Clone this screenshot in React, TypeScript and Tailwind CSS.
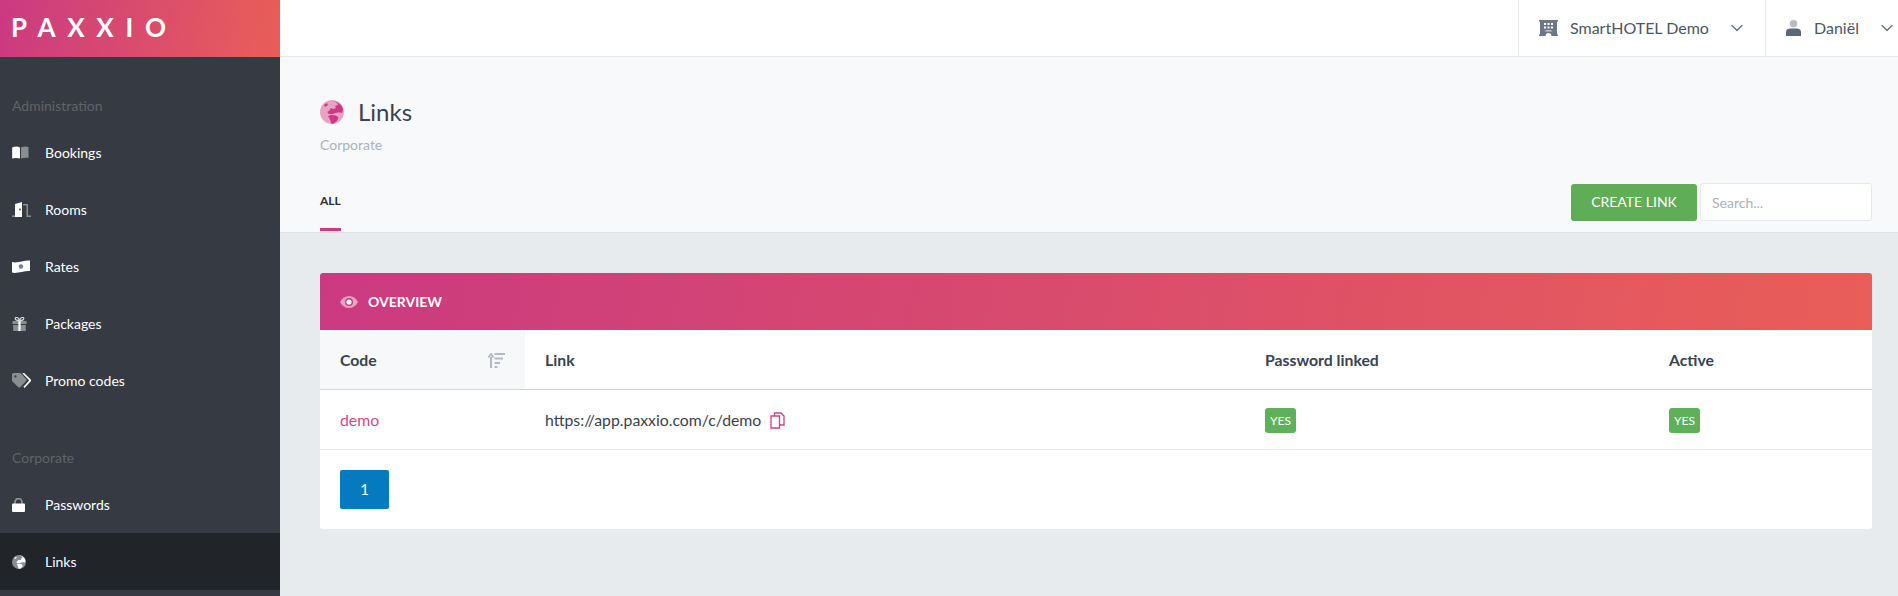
import { ChevronDown } from "lucide-react";
import type { ReactNode } from "react";

// Two-tone sidebar icons: white part and grey part
const GREY = "#8a8d92";

const BookIcon = () => (
  <svg width="17" height="13" viewBox="0 0 18 14">
    <path d="M0 1.5 C3 .3 6 .3 8.4 1.5 V13.5 C6 12.6 3 12.6 0 13.4 Z" fill="#fff" />
    <path d="M9.6 1.5 C12 .3 15 .3 17.6 1.2 V12.8 C15 12.4 12 12.6 9.6 13.5 Z" fill={GREY} />
  </svg>
);

const DoorIcon = () => (
  <svg width="19" height="15" viewBox="0 0 19 15">
    <path d="M3 15 V2 L10 0 V15 Z" fill="#fff" />
    <circle cx="8" cy="7.5" r=".9" fill="#363a42" />
    <path d="M0 13.4 H3 V15 H0 Z" fill={GREY} />
    <path d="M11 2 H16 V13.4 H19 V15 H14.5 V3.6 H11 Z" fill={GREY} />
  </svg>
);

const MoneyIcon = () => (
  <svg width="18" height="13" viewBox="0 0 18 13">
    <path d="M0 2 C5 3.5 12 0 18 .5 V11 C12 10.5 5 14 0 12.5 Z" fill="#fff" />
    <circle cx="9" cy="6.5" r="2.2" fill="#6f7f96" />
  </svg>
);

const GiftIcon = () => (
  <svg width="15" height="14" viewBox="0 0 15 14">
    <path d="M0.5 4 H14.5 V7 H0.5 Z M1.2 8 H13.8 V14 H1.2 Z" fill={GREY} />
    <path d="M6.4 4 H8.6 V14 H6.4 Z" fill="#fff" />
    <path d="M7.5 3.6 C5 3.6 3.2 3 3.2 1.6 C3.2 -.3 6.4 0 7.5 3.2 C8.6 0 11.8 -.3 11.8 1.6 C11.8 3 10 3.6 7.5 3.6 Z" fill="none" stroke="#d7d8da" strokeWidth="1.2" />
  </svg>
);

const TagIcon = () => (
  <svg width="19" height="15" viewBox="0 0 19 15">
    <path d="M0 1.5 Q0 0 1.5 0 H8.5 L15 7 L8.5 14 Q7.5 15 6.4 14.2 L0 8 Z" fill={GREY} />
    <circle cx="3.4" cy="3.4" r="1.1" fill="#363a42" />
    <path d="M11 0 L18.4 7.4 L12 14.4" fill="none" stroke="#fff" strokeWidth="1.6" />
  </svg>
);

const LockIcon = () => (
  <svg width="13" height="14" viewBox="0 0 13 14">
    <path d="M3 6 V4 A3.5 3.5 0 0 1 10 4 V6" fill="none" stroke={GREY} strokeWidth="1.8" />
    <rect x="0" y="5.5" width="13" height="8.5" rx="1" fill="#fff" />
  </svg>
);

const Globe = ({ sea, land }: { sea: string; land: string }) => (
  <svg viewBox="0 0 24 24" className="h-full w-full">
    <circle cx="12" cy="12" r="12" fill={sea} />
    <path d="M13 1 C16 2 18 3 18 5 L15 6 L16 8 L13 9 L11 8 L9 11 C6 11 8 15 12 14 C16 13 19 12 22 13 L23 10 C23 6 19 2 13 1 Z" fill={land} />
    <path d="M8 16 C12 14 16 15 18 17 C19 19 16 23 12 24 C10 22 11 20 8 16 Z" fill={land} />
    <path d="M4 5 L7 3 L8 5 L5 7 Z" fill={land} />
  </svg>
);

const navGroups: { label: string; items: { name: string; icon: ReactNode; active?: boolean }[] }[] = [
  {
    label: "Administration",
    items: [
      { name: "Bookings", icon: <BookIcon /> },
      { name: "Rooms", icon: <DoorIcon /> },
      { name: "Rates", icon: <MoneyIcon /> },
      { name: "Packages", icon: <GiftIcon /> },
      { name: "Promo codes", icon: <TagIcon /> },
    ],
  },
  {
    label: "Corporate",
    items: [
      { name: "Passwords", icon: <LockIcon /> },
      {
        name: "Links",
        active: true,
        icon: (
          <span className="block h-[14px] w-[14px]">
            <Globe sea="#8a8d92" land="#ffffff" />
          </span>
        ),
      },
    ],
  },
];

const Sidebar = () => (
  <aside className="flex w-[280px] shrink-0 flex-col bg-[#363a42]">
    <div className="flex h-[57px] items-center bg-[linear-gradient(100deg,#cb3a82,#e95e58)] pb-[2px] pl-[11px] text-[26px] font-bold tracking-[11.7px] text-white">
      PAXXIO
    </div>
    {navGroups.map((group) => (
      <div key={group.label}>
        <div className="pb-2 pl-3 pt-[39px] text-sm leading-5 text-[#5f636a]">{group.label}</div>
        {group.items.map((item) => (
          <div
            key={item.name}
            className={`flex h-[57px] items-center pl-3 text-sm text-white ${item.active ? "bg-[#212428]" : ""}`}
          >
            <span className="flex w-[33px] items-center">{item.icon}</span>
            {item.name}
          </div>
        ))}
      </div>
    ))}
  </aside>
);

const Topbar = () => (
  <header className="flex h-[57px] justify-end border-b border-[#e6e9ed] bg-white text-base text-[#4d5661]">
    <div className="flex w-[247px] items-center border-l border-[#e6e9ed] pl-5">
      <svg width="19" height="16" viewBox="0 0 19 16" className="mr-[12px]">
        <path d="M0 0 H19 V1.4 H18 V14.6 H19 V16 H12.5 C12.5 12 6.5 12 6.5 16 H0 V14.6 H1 V1.4 H0 Z" fill="#6c7786" />
        <path d="M5 3 H7 V5 H5 Z M8.5 3 H10.5 V5 H8.5 Z M12 3 H14 V5 H12 Z M5 6.5 H7 V8.5 H5 Z M8.5 6.5 H10.5 V8.5 H8.5 Z M12 6.5 H14 V8.5 H12 Z" fill="#fff" />
        <path d="M5.5 11.5 C7 9.6 12 9.6 13.5 11.5 Z" fill="#c8ccd2" />
      </svg>
      <span className="w-[157px]">SmartHOTEL Demo</span>
      <ChevronDown size={20} strokeWidth={1.75} className="text-[#6c7786]" />
    </div>
    <div className="flex w-[133px] items-center border-l border-[#e6e9ed] pl-5">
      <svg width="15" height="16" viewBox="0 0 15 16" className="mr-[13px]">
        <circle cx="7.5" cy="3.8" r="3.8" fill="#b9bdc3" />
        <path d="M0 16 V12 C0 9.5 2.5 8.6 4.5 8.6 H10.5 C12.5 8.6 15 9.5 15 12 V16 Z" fill="#5d6877" />
      </svg>
      <span className="w-[63px]">Daniël</span>
      <ChevronDown size={20} strokeWidth={1.75} className="text-[#6c7786]" />
    </div>
  </header>
);

const PageHead = () => (
  <section className="h-[176px] border-b border-[#dfe2e6] bg-[#f8f9fb] pl-10 pr-[26px]">
    <div className="flex items-center pt-[43px]">
      <span className="mr-[14px] block h-6 w-6">
        <Globe sea="#e8a3c4" land="#cb3a82" />
      </span>
      <h1 className="text-2xl leading-6 text-[#39424e]">Links</h1>
    </div>
    <p className="mt-[11px] text-sm leading-5 text-[#abb2bb]">Corporate</p>
    <div className="mt-[28px] flex items-start justify-between">
      <div className="relative h-[48px]">
        <span className="block pt-[9px] text-xs font-bold leading-[18px] text-[#2b3038]">ALL</span>
        <span className="absolute bottom-0 left-0 h-[3px] w-full bg-[#cb3a82]" />
      </div>
      <div className="flex items-center gap-[3px]">
        <button className="h-[37px] w-[126px] rounded-[3px] bg-[#5fad56] text-sm text-white">CREATE LINK</button>
        <input
          placeholder="Search..."
          className="h-[38px] w-[172px] rounded-[3px] border border-[#e6e9ed] bg-white px-[11px] text-sm placeholder:text-[#abb2bb]"
        />
      </div>
    </div>
  </section>
);

const YesBadge = () => (
  <span className="inline-block h-[25px] w-[31px] rounded-[3px] bg-[#5fb05a] text-center text-xs leading-[26px] text-white">
    YES
  </span>
);

const LinksCard = () => (
  <div className="overflow-hidden rounded-[3px] bg-white">
    <div className="flex h-[57px] items-center bg-[linear-gradient(100deg,#cb3a80,#e95e58)] pl-5 text-sm font-bold text-white">
      <svg width="18" height="12" viewBox="0 0 18 12" className="mr-[10px]">
        <path d="M0 6 C4 -2 14 -2 18 6 C14 14 4 14 0 6 Z" fill="#e9a3c3" />
        <circle cx="9" cy="6" r="4" fill="#cb3a80" />
        <circle cx="9" cy="6" r="2.6" fill="#fff" />
      </svg>
      OVERVIEW
    </div>
    <table className="w-full table-fixed border-collapse text-[15.8px] text-[#39424e]">
      <colgroup>
        <col className="w-[205px]" />
        <col className="w-[720px]" />
        <col className="w-[404px]" />
        <col />
      </colgroup>
      <thead>
        <tr className="h-[59px] border-b border-[#d2d5da] text-left">
          <th className="bg-[#f7f8fa] pl-5 pt-[2px] font-bold">
            <div className="flex items-center justify-between pr-[20px]">
              Code
              <svg width="17" height="15" viewBox="0 0 17 15">
                <path d="M3 15 V4 M0.5 4.5 L3 1 L5.5 4.5" fill="none" stroke="#b4b9c0" strokeWidth="2" />
                <path d="M6.5 1 H17 M6.5 5.5 H15 M6.5 10 H12 M6.5 14 H9.5" stroke="#b4b9c0" strokeWidth="1.8" />
              </svg>
            </div>
          </th>
          <th className="pl-5 pt-[2px] font-bold">Link</th>
          <th className="pl-5 pt-[2px] font-bold">Password linked</th>
          <th className="pl-5 pt-[2px] font-bold">Active</th>
        </tr>
      </thead>
      <tbody>
        <tr className="h-[60px] border-b border-[#e9ebee]">
          <td className="pl-5 pt-[2px] text-[#cf4a8c]">demo</td>
          <td className="pl-5 pt-[2px]">
            <span className="flex items-center">
              https://app.paxxio.com/c/demo
              <svg width="15" height="17" viewBox="0 0 15 17" className="ml-[9px]" fill="none" stroke="#cf3f88" strokeWidth="1.3">
                <path d="M1 4 H9.5 V16 H1 Z" />
                <path d="M4.5 4 V1 H11 L14 4 V13 H9.5" />
              </svg>
            </span>
          </td>
          <td className="pl-5 pt-[2px]">
            <YesBadge />
          </td>
          <td className="pl-5 pt-[2px]">
            <YesBadge />
          </td>
        </tr>
      </tbody>
    </table>
    <div className="px-5 pb-5 pt-5">
      <button className="h-[39px] w-[49px] rounded-[2px] bg-[#067ac1] text-[15px] text-white">1</button>
    </div>
  </div>
);

export default function App() {
  return (
    <div className="flex h-[596px] overflow-hidden bg-[#e8ebee] font-[Lato,sans-serif]">
      <Sidebar />
      <div className="flex min-w-0 flex-1 flex-col">
        <Topbar />
        <PageHead />
        <main className="pl-10 pr-[26px] pt-10">
          <LinksCard />
        </main>
      </div>
    </div>
  );
}
